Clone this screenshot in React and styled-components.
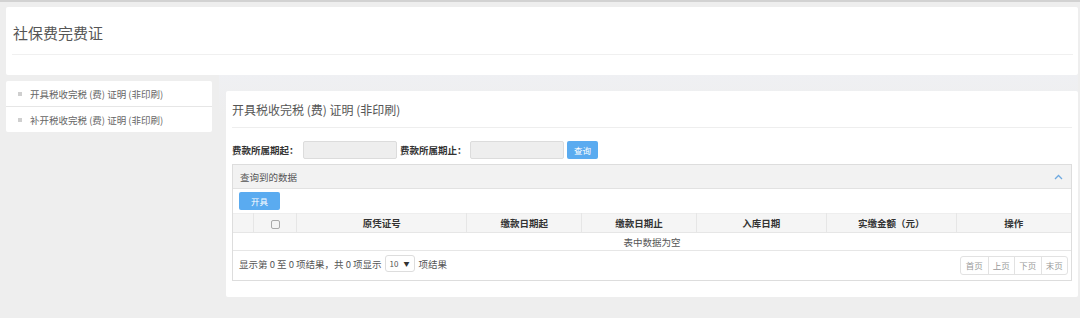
import React from "react";
import styled, { createGlobalStyle } from "styled-components";

const GlobalStyle = createGlobalStyle`
  html, body {
    margin: 0;
    padding: 0;
    background: #eeeeee;
    font-family: "Noto Sans CJK SC", "Liberation Sans", sans-serif;
    color: #555;
  }
  * { box-sizing: border-box; }
`;

const Page = styled.div`
  border-top: 2px solid #d2d2d2;
  padding: 5px 2px 0 6px;
  min-height: 318px;
`;

const HeaderCard = styled.div`
  background: #fff;
  border-radius: 2px;
  height: 68px;
  padding: 0 5px 0 6px;
`;

const PageTitle = styled.h1`
  margin: 0;
  height: 48px;
  line-height: 52px;
  padding-left: 1px;
  font-size: 15px;
  font-weight: normal;
  color: #555;
  border-bottom: 1px solid #f0f0f0;
`;

const Body = styled.div`
  display: flex;
  align-items: flex-start;
`;

const Sidebar = styled.ul`
  list-style: none;
  margin: 6px 0 0 0;
  padding: 0;
  width: 206px;
  background: #fff;
  border-radius: 2px;
`;

const SideItem = styled.li`
  display: flex;
  align-items: center;
  height: ${(p) => (p.$last ? "25px" : "26px")};
  padding-left: 12px;
  font-size: 9.5px;
  color: #666;
  border-bottom: ${(p) => (p.$last ? "none" : "1px solid #e6e6e6")};

  &::before {
    content: "";
    width: 4px;
    height: 4px;
    background: #cfcfcf;
    margin-right: 8px;
  }
`;

const Main = styled.div`
  flex: 1;
  margin-left: 7px;
  padding: 16px 0 0 7px;
  background: linear-gradient(#eff0f3, #eeeeee 40px);
`;

const Card = styled.div`
  background: #fff;
  border-radius: 2px;
  padding: 0 6px 16px 6px;
`;

const CardTitle = styled.h2`
  margin: 0;
  height: 37px;
  line-height: 38px;
  font-size: 12px;
  font-weight: normal;
  color: #555;
  border-bottom: 1px solid #eeeeee;
`;

const FormRow = styled.div`
  display: flex;
  align-items: center;
  margin-top: 13px;
  height: 18px;
`;

const Label = styled.span`
  font-size: 9.5px;
  font-weight: bold;
  color: #333;
  width: ${(p) => p.$w}px;
`;

const Input = styled.div`
  width: 94px;
  height: 18px;
  background: #eeeeee;
  border: 1px solid #dcdcdc;
  border-radius: 2px;
  margin-right: 3px;
`;

const BlueButton = styled.button`
  display: block;
  height: 18px;
  padding: 0 ${(p) => p.$px || 7}px;
  background: #5aabf0;
  color: #fff;
  border: none;
  border-radius: 2px;
  font-family: inherit;
  font-size: 8.5px;
  line-height: 18px;
`;

const Panel = styled.div`
  margin-top: 5px;
  border: 1px solid #dddddd;
`;

const PanelHead = styled.div`
  display: flex;
  align-items: center;
  justify-content: space-between;
  height: 24px;
  padding: 0 8px 0 7px;
  background: #f2f2f2;
  border-bottom: 1px solid #e2e2e2;
  font-size: 9.5px;
  color: #555;
`;

const Toolbar = styled.div`
  display: flex;
  padding: 3px 6px 3px 6px;
`;

const Table = styled.table`
  width: 100%;
  border-collapse: collapse;
  font-size: 9.5px;
  line-height: 12px;
`;

const Th = styled.th`
  height: 19px;
  padding: 0;
  background: #f5f5f5;
  border: 1px solid #e6e6e6;
  border-top: 1px solid #eeeeee;
  color: #333;
  font-weight: bold;
  text-align: center;
  &:first-child { border-left: none; }
  &:last-child { border-right: none; }
`;

const Td = styled.td`
  height: 18px;
  padding: 0;
  text-align: center;
  color: #555;
  border-bottom: 1px solid #e6e6e6;
`;

const Check = styled.span`
  display: inline-block;
  width: 9px;
  height: 9px;
  border: 1px solid #aaa;
  border-radius: 2px;
  background: #f4f4f4;
  vertical-align: middle;
`;

const Footer = styled.div`
  display: flex;
  align-items: center;
  justify-content: space-between;
  height: 29px;
  padding: 0 3px 0 6px;
  font-size: 9.5px;
  color: #555;
`;

const Info = styled.div`
  display: flex;
  align-items: center;
  margin-top: -4px;
`;

const Select = styled.div`
  display: flex;
  align-items: center;
  justify-content: space-between;
  width: 30px;
  height: 17px;
  margin: 0 4px 0 3px;
  padding: 0 4px;
  border: 1px solid #dddddd;
  border-radius: 3px;
  font-size: 8px;
  color: #555;
  span:last-child { font-size: 6px; color: #333; }
`;

const Pager = styled.div`
  display: flex;
  border: 1px solid #e2e2e2;
  border-radius: 3px;
`;

const PageBtn = styled.span`
  width: 26.5px;
  height: 17px;
  line-height: 17px;
  text-align: center;
  font-size: 8.5px;
  color: #999;
  border-left: ${(p) => (p.$first ? "none" : "1px solid #e2e2e2")};
`;

const columns = [
  { w: 21, t: "" },
  { w: 43, t: "check" },
  { w: 170, t: "原凭证号" },
  { w: 115, t: "缴款日期起" },
  { w: 115, t: "缴款日期止" },
  { w: 130, t: "入库日期" },
  { w: 130, t: "实缴金额（元）" },
  { w: 115, t: "操作" },
];

export default function App() {
  return (
    <>
      <GlobalStyle />
      <Page>
        <HeaderCard>
          <PageTitle>社保费完费证</PageTitle>
        </HeaderCard>
        <Body>
          <Sidebar>
            <SideItem>开具税收完税 (费) 证明 (非印刷)</SideItem>
            <SideItem $last>补开税收完税 (费) 证明 (非印刷)</SideItem>
          </Sidebar>
          <Main>
            <Card>
              <CardTitle>开具税收完税 (费) 证明 (非印刷)</CardTitle>
              <FormRow>
                <Label $w={71}>费款所属期起：</Label>
                <Input />
                <Label $w={70}>费款所属期止：</Label>
                <Input />
                <BlueButton>查询</BlueButton>
              </FormRow>
              <Panel>
                <PanelHead>
                  <span>查询到的数据</span>
                  <svg width="9" height="6" viewBox="0 0 9 6">
                    <path d="M1 5 L4.5 1.5 L8 5" fill="none" stroke="#6ea9e0" strokeWidth="1.3" />
                  </svg>
                </PanelHead>
                <Toolbar>
                  <BlueButton $px={12}>开具</BlueButton>
                </Toolbar>
                <Table>
                  <colgroup>
                    {columns.map((c, i) => (
                      <col key={i} style={{ width: c.w }} />
                    ))}
                  </colgroup>
                  <thead>
                    <tr>
                      {columns.map((c, i) => (
                        <Th key={i}>{c.t === "check" ? <Check /> : c.t}</Th>
                      ))}
                    </tr>
                  </thead>
                  <tbody>
                    <tr>
                      <Td colSpan={8}>表中数据为空</Td>
                    </tr>
                  </tbody>
                </Table>
                <Footer>
                  <Info>
                    显示第 0 至 0 项结果，共 0 项显示
                    <Select>
                      <span>10</span>
                      <span>▼</span>
                    </Select>
                    项结果
                  </Info>
                  <Pager>
                    <PageBtn $first>首页</PageBtn>
                    <PageBtn>上页</PageBtn>
                    <PageBtn>下页</PageBtn>
                    <PageBtn>末页</PageBtn>
                  </Pager>
                </Footer>
              </Panel>
            </Card>
          </Main>
        </Body>
      </Page>
    </>
  );
}
